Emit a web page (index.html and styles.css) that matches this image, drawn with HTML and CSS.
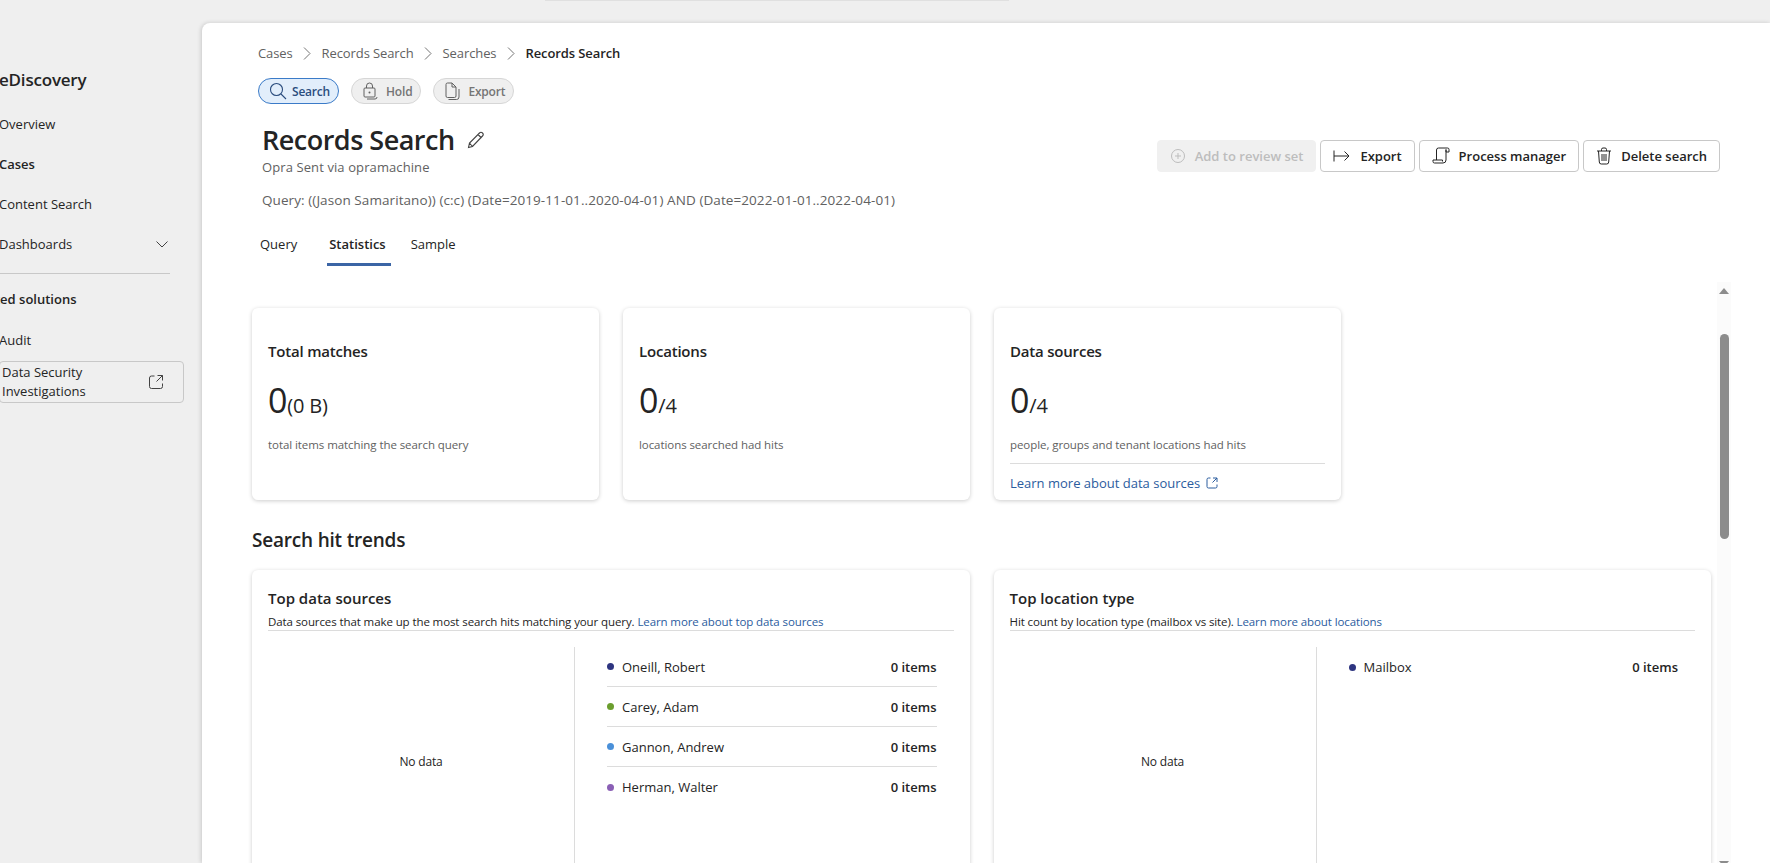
FILE: index.html
```html
<!DOCTYPE html>
<html>
<head>
    <link rel="stylesheet" href="styles.css">
</head>
<body>
    <div class="top-search"></div>
    <div class="app">
        <nav class="sidebar">
            <div class="sidebar-inner">
                <div class="app-name">eDiscovery</div>
                <a class="nav-item">Overview</a>
                <a class="nav-item nav-active">Cases</a>
                <a class="nav-item">Content Search</a>
                <a class="nav-item nav-expand">
                    Dashboards
                    <svg class="nav-chevron" width="14" height="14" viewBox="0 0 14 14"><path d="M1.5 4.5 7 10l5.5-5.5" fill="none" stroke="#424242" stroke-width="1"/></svg>
                </a>
                <div class="nav-divider"></div>
                <div class="nav-group">Related solutions</div>
                <a class="nav-item">Audit</a>
                <a class="nav-box">
                    <span>Data Security<br>Investigations</span>
                    <svg width="16" height="16" viewBox="0 0 16 16"><path d="M6.5 2H3.5A2 2 0 0 0 1.500 4v8.500a2 2 0 0 0 2 2h9a2 2 0 0 0 2-2V9.500M9.500 1.500h5v5M14.500 1.500 8.500 7.500" fill="none" stroke="#424242" stroke-width="1"/></svg>
                </a>
            </div>
        </nav>

        <main class="panel">
            <header class="page-head">
                <div class="breadcrumb">
                    <span>Cases</span>
                    <svg class="crumb-sep" width="12" height="14" viewBox="0 0 12 14"><path d="M3 1.500 9 7.500 3 13.500" fill="none" stroke="#757575"/></svg>
                    <span>Records Search</span>
                    <svg class="crumb-sep" width="12" height="14" viewBox="0 0 12 14"><path d="M3 1.500 9 7.500 3 13.500" fill="none" stroke="#757575"/></svg>
                    <span>Searches</span>
                    <svg class="crumb-sep" width="12" height="14" viewBox="0 0 12 14"><path d="M3 1.500 9 7.500 3 13.500" fill="none" stroke="#757575"/></svg>
                    <span class="crumb-current">Records Search</span>
                </div>
                <div class="steps">
                    <div class="step step-active">
                        <svg width="18" height="18" viewBox="0 0 18 18"><circle cx="7.500" cy="7.500" r="6" fill="none" stroke="#2b4d7e" stroke-width="1.100"/><path d="M12 12l5 5" stroke="#2b4d7e" stroke-width="1.100"/></svg>
                        Search
                    </div>
                    <div class="step">
                        <svg width="16" height="18" viewBox="0 0 16 18"><path d="M4.500 6V4a3 3 0 0 1 6 0v2M3 6h9a1 1 0 0 1 1 1v7a1 1 0 0 1-1 1H3a1 1 0 0 1-1-1V7a1 1 0 0 1 1-1zM5 17h8a2 2 0 0 0 2-2" fill="none" stroke="#616161"/><circle cx="7.500" cy="10.500" r="1" fill="#616161"/></svg>
                        Hold
                    </div>
                    <div class="step">
                        <svg width="16" height="18" viewBox="0 0 16 18"><path d="M2 2.500A1.500 1.500 0 0 1 3.500 1H8l4 4v9a1.500 1.500 0 0 1-1.500 1.500h-7A1.500 1.500 0 0 1 2 14zM8 1v4h4M4.500 17.500h8a2.500 2.500 0 0 0 2.500-2.500V7" fill="none" stroke="#616161"/></svg>
                        Export
                    </div>
                </div>
                <div class="title-row">
                    <div class="title-block">
                        <h1 class="page-title">Records Search
                            <svg width="18" height="18" viewBox="0 0 18 18"><path d="M1.500 16.500 2.500 12 12.500 2a2 2 0 0 1 3 3L5.500 15.500zM11 3.500l3.500 3.500M2.500 12l3 3.500" fill="none" stroke="#424242" stroke-width="1.100"/></svg>
                        </h1>
                        <div class="page-sub">Opra Sent via opramachine</div>
                    </div>
                    <div class="actions">
                        <button class="btn btn-disabled">
                            <svg width="16" height="16" viewBox="0 0 16 16"><circle cx="8" cy="8" r="6.500" fill="none" stroke="#bdbdbd"/><path d="M8 5v6M5 8h6" stroke="#bdbdbd"/></svg>
                            Add to review set
                        </button>
                        <button class="btn">
                            <svg width="18" height="16" viewBox="0 0 18 16"><path d="M1 2.500v11M1 8h15M11.500 3.500 16 8l-4.500 4.500" fill="none" stroke="#242424"/></svg>
                            Export
                        </button>
                        <button class="btn">
                            <svg width="18" height="18" viewBox="0 0 18 18"><path d="M4.500 13V3a2 2 0 0 1 2-2h9M15.500 1a1.500 1.500 0 0 1 1.500 1.500V5h-3V2.500M14 2.500V13a3 3 0 0 1-3 3H2.500A1.500 1.500 0 0 1 1 14.500V13h9.500v1.500" fill="none" stroke="#242424"/></svg>
                            Process manager
                        </button>
                        <button class="btn">
                            <svg width="16" height="18" viewBox="0 0 16 18"><path d="M1 4h14M5.500 4V2.500a1.500 1.500 0 0 1 1.500-1.500h2a1.500 1.500 0 0 1 1.500 1.500V4M2.500 4l.8 11a2 2 0 0 0 2 2h5.400a2 2 0 0 0 2-2l.8-11M6 7v7M8 7v7M10 7v7" fill="none" stroke="#242424"/></svg>
                            Delete search
                        </button>
                    </div>
                </div>
                <div class="query">Query: ((Jason Samaritano)) (c:c) (Date=2019-11-01..2020-04-01) AND (Date=2022-01-01..2022-04-01)</div>
                <div class="tabs">
                    <div class="tab">Query</div>
                    <div class="tab tab-active">Statistics</div>
                    <div class="tab">Sample</div>
                </div>
            </header>

            <div class="scroll-area">
                <div class="content">
                    <div class="stat-row">
                        <section class="card stat-card">
                            <h3 class="stat-title">Total matches</h3>
                            <div class="stat-value">0<small>(0 B)</small></div>
                            <p class="stat-note">total items matching the search query</p>
                        </section>
                        <section class="card stat-card">
                            <h3 class="stat-title">Locations</h3>
                            <div class="stat-value">0<small>/4</small></div>
                            <p class="stat-note">locations searched had hits</p>
                        </section>
                        <section class="card stat-card">
                            <h3 class="stat-title">Data sources</h3>
                            <div class="stat-value">0<small>/4</small></div>
                            <p class="stat-note">people, groups and tenant locations had hits</p>
                            <div class="stat-foot">
                                <a class="link">Learn more about data sources</a>
                                <svg width="12" height="12" viewBox="0 0 12 12"><path d="M4.500 1H2.500A1.500 1.500 0 0 0 1 2.500v7A1.500 1.500 0 0 0 2.500 11h7A1.500 1.500 0 0 0 11 9.500V7.500M7 1h4v4M11 1 6.500 5.500" fill="none" stroke="#2b5c9e"/></svg>
                            </div>
                        </section>
                    </div>

                    <h2 class="section-title">Search hit trends</h2>

                    <div class="trend-row">
                        <section class="card trend-card">
                            <div class="trend-head">
                                <h3 class="trend-title">Top data sources</h3>
                                <p class="trend-sub">Data sources that make up the most search hits matching your query. <a class="link">Learn more about top data sources</a></p>
                            </div>
                            <div class="trend-body">
                                <div class="no-data">No data</div>
                                <ul class="legend">
                                    <li class="legend-row"><span class="dot dot-navy"></span><span class="legend-name">Oneill, Robert</span><b>0 items</b></li>
                                    <li class="legend-row"><span class="dot dot-green"></span><span class="legend-name">Carey, Adam</span><b>0 items</b></li>
                                    <li class="legend-row"><span class="dot dot-blue"></span><span class="legend-name">Gannon, Andrew</span><b>0 items</b></li>
                                    <li class="legend-row"><span class="dot dot-purple"></span><span class="legend-name">Herman, Walter</span><b>0 items</b></li>
                                </ul>
                            </div>
                        </section>
                        <section class="card trend-card">
                            <div class="trend-head">
                                <h3 class="trend-title">Top location type</h3>
                                <p class="trend-sub">Hit count by location type (mailbox vs site). <a class="link">Learn more about locations</a></p>
                            </div>
                            <div class="trend-body">
                                <div class="no-data">No data</div>
                                <ul class="legend">
                                    <li class="legend-row"><span class="dot dot-navy"></span><span class="legend-name">Mailbox</span><b>0 items</b></li>
                                </ul>
                            </div>
                        </section>
                    </div>
                </div>
                <div class="scrollbar">
                    <div class="scroll-arrow"></div>
                    <div class="scroll-thumb"></div>
                    <div class="scroll-arrow scroll-arrow-end"></div>
                </div>
            </div>
        </main>
    </div>
</body>
</html>
```

FILE: styles.css
```css
* {
    box-sizing: border-box;
}

html, body {
    height: 100%;
}

body {
    margin: 0;
    overflow: hidden;
    position: relative;
    background-color: #efefef;
    color: #242424;
    font-family: "Open Sans", "Noto Sans", sans-serif;
    font-size: 13px;
    letter-spacing: -0.2px;
}

h1, h2, h3, p, ul {
    margin: 0;
    padding: 0;
}

ul {
    list-style: none;
}

.top-search {
    position: absolute;
    top: 0;
    left: 545px;
    width: 464px;
    height: 1px;
    background-color: #e0e0e0;
}

.app {
    display: flex;
    height: 100%;
}

/* left nav, scrolled a little off the window edge */
.sidebar {
    width: 202px;
    flex-shrink: 0;
    overflow: hidden;
    letter-spacing: 0;
}

.sidebar-inner {
    width: 200px;
    padding-top: 68px;
}

.app-name {
    font-size: 17px;
    font-weight: 600;
    line-height: 24px;
    margin-bottom: 12px;
    margin-left: -1px;
    letter-spacing: -0.2px;
}

.nav-item {
    display: flex;
    align-items: center;
    height: 40px;
    margin-left: -1px;
}

.nav-active {
    font-weight: 600;
}

.nav-expand {
    justify-content: space-between;
    width: 170px;
}

.nav-divider {
    width: 170px;
    height: 1px;
    margin: 9px 0 14px;
    background-color: #c8c8c8;
}

.nav-group {
    font-weight: 600;
    line-height: 22px;
    margin-left: -32px;
    margin-bottom: 10px;
    white-space: nowrap;
}

.nav-box {
    display: flex;
    align-items: center;
    justify-content: space-between;
    width: 185px;
    height: 42px;
    margin-top: 1px;
    margin-left: -1px;
    padding: 0 19px 0 2px;
    line-height: 19px;
    border: 1px solid #c8c8c8;
    border-radius: 4px;
}

.panel {
    flex: 1;
    min-width: 0;
    margin-top: 23px;
    background-color: #fff;
    border-top-left-radius: 8px;
    box-shadow: -1px 0 4px rgba(0, 0, 0, 0.16);
    display: flex;
    flex-direction: column;
}

.page-head {
    padding-left: 56px;
    padding-right: 50px;
}

.breadcrumb {
    display: flex;
    align-items: center;
    height: 20px;
    margin-top: 20px;
    color: #616161;
    gap: 8.500px;
    letter-spacing: -0.1px;
}

.crumb-current {
    color: #242424;
    font-weight: 600;
}

.steps {
    display: flex;
    gap: 12px;
    margin-top: 15px;
}

.step {
    display: flex;
    align-items: center;
    gap: 8px;
    height: 26px;
    padding: 0 8px 0 10px;
    font-size: 12px;
    font-weight: 600;
    color: #757575;
    background-color: #efefef;
    border: 1px solid #d6d6d6;
    border-radius: 13px;
}

.step-active {
    gap: 5px;
    color: #2b4d7e;
    background-color: #e2eefb;
    border-color: #3b7bc8;
}

.title-row {
    display: flex;
    justify-content: space-between;
    align-items: flex-start;
    margin-top: 18px;
    padding-left: 4px;
}

.page-title {
    display: flex;
    align-items: center;
    gap: 12px;
    font-size: 27px;
    font-weight: 600;
    line-height: 36px;
    letter-spacing: -0.5px;
}

.page-sub {
    color: #616161;
    line-height: 18px;
    letter-spacing: 0.1px;
}

.actions {
    display: flex;
    gap: 4px;
    margin-top: 18px;
}

.btn {
    display: flex;
    align-items: center;
    gap: 9px;
    height: 32px;
    padding: 0 12px;
    font-family: inherit;
    font-size: 13px;
    font-weight: 600;
    letter-spacing: 0;
    color: #242424;
    background-color: #fff;
    border: 1px solid #c8c8c8;
    border-radius: 4px;
}

.btn-disabled {
    color: #bdbdbd;
    background-color: #f0f0f0;
    border-color: #f0f0f0;
}

.query {
    margin-top: 15px;
    padding-left: 4px;
    color: #616161;
    font-size: 13.5px;
    line-height: 18px;
    letter-spacing: 0.08px;
}

.tabs {
    display: flex;
    margin-top: 16px;
    margin-left: -2px;
    letter-spacing: 0;
}

.tab {
    height: 41px;
    padding: 9px 4px 0;
    line-height: 20px;
    margin-right: 16px;
}

.tab:first-child {
    margin-right: 26px;
}

.tab-active {
    padding: 9px 5px 0 2px;
    font-weight: 600;
    border-bottom: 3px solid #3b65a5;
}

.scroll-area {
    flex: 1;
    min-height: 0;
    display: flex;
    padding-left: 50px;
    margin-top: 16px;
    overflow: hidden;
}

.content {
    width: 1459px;
    flex-shrink: 0;
    padding-top: 26px;
}

.card {
    background-color: #fff;
    border-radius: 6px;
    box-shadow: 0 1px 4px rgba(0, 0, 0, 0.2);
}

.stat-row {
    display: flex;
    gap: 24px;
}

.stat-card {
    width: 347px;
    height: 192px;
    padding: 32px 16px 0;
}

.stat-title {
    font-size: 15px;
    font-weight: 600;
    line-height: 22px;
}

.stat-value {
    margin-top: 16px;
    font-size: 34px;
    line-height: 44px;
}

.stat-value small {
    font-size: 20px;
}

.stat-note {
    margin-top: 9px;
    font-size: 11.500px;
    line-height: 16px;
    letter-spacing: -0.07px;
    color: #616161;
}

.stat-foot {
    display: flex;
    align-items: center;
    gap: 6px;
    margin-top: 10px;
    padding-top: 10px;
    letter-spacing: 0;
    border-top: 1px solid #dcdcdc;
}

.link {
    color: #2b5c9e;
}

.section-title {
    font-size: 19px;
    font-weight: 600;
    line-height: 28px;
    margin-top: 26px;
}

.trend-row {
    display: flex;
    gap: 24px;
    margin-top: 16px;
}

.trend-card {
    width: 718px;
    height: 500px;
    padding: 17px 16px 0;
}

.trend-title {
    font-size: 15px;
    font-weight: 600;
    line-height: 22px;
    letter-spacing: 0;
}

.trend-sub {
    height: 19px;
    margin-top: 3px;
    font-size: 11.500px;
    line-height: 20px;
    letter-spacing: -0.1px;
    border-bottom: 1px solid #dcdcdc;
}

.trend-body {
    display: flex;
    margin-top: 16px;
    height: 400px;
}

.no-data {
    width: 307px;
    flex-shrink: 0;
    padding-top: 105px;
    font-size: 12px;
    line-height: 20px;
    text-align: center;
    border-right: 1px solid #dcdcdc;
}

.legend {
    flex: 1;
    padding: 0 17px 0 32px;
    letter-spacing: 0;
}

.legend-row {
    display: flex;
    align-items: center;
    height: 40px;
    border-bottom: 1px solid #dcdcdc;
}

.legend-row:last-child {
    border-bottom: none;
}

.legend-row b {
    font-weight: 600;
}

.legend-name {
    flex: 1;
}

.dot {
    width: 7px;
    height: 7px;
    border-radius: 50%;
    margin-right: 8px;
}

.dot-navy {
    background-color: #2e3580;
}

.dot-green {
    background-color: #6b9e2e;
}

.dot-blue {
    background-color: #4a90d9;
}

.dot-purple {
    background-color: #8a5fb5;
}

.scrollbar {
    width: 14px;
    margin-left: 6px;
    padding-top: 6px;
    display: flex;
    flex-direction: column;
    align-items: center;
    background-color: #fbfbfb;
}

.scroll-arrow {
    width: 0;
    height: 0;
    flex-shrink: 0;
    border-left: 5px solid transparent;
    border-right: 5px solid transparent;
    border-bottom: 6px solid #8c8c8c;
}

.scroll-thumb {
    width: 9px;
    height: 205px;
    flex-shrink: 0;
    margin-top: 40px;
    background-color: #8c8c8c;
    border-radius: 5px;
}

/* only the tip of the lower arrow shows above the window edge */
.scroll-arrow-end {
    margin-top: auto;
    margin-bottom: -4px;
    border-top: 6px solid #8c8c8c;
    border-bottom: none;
}
```
